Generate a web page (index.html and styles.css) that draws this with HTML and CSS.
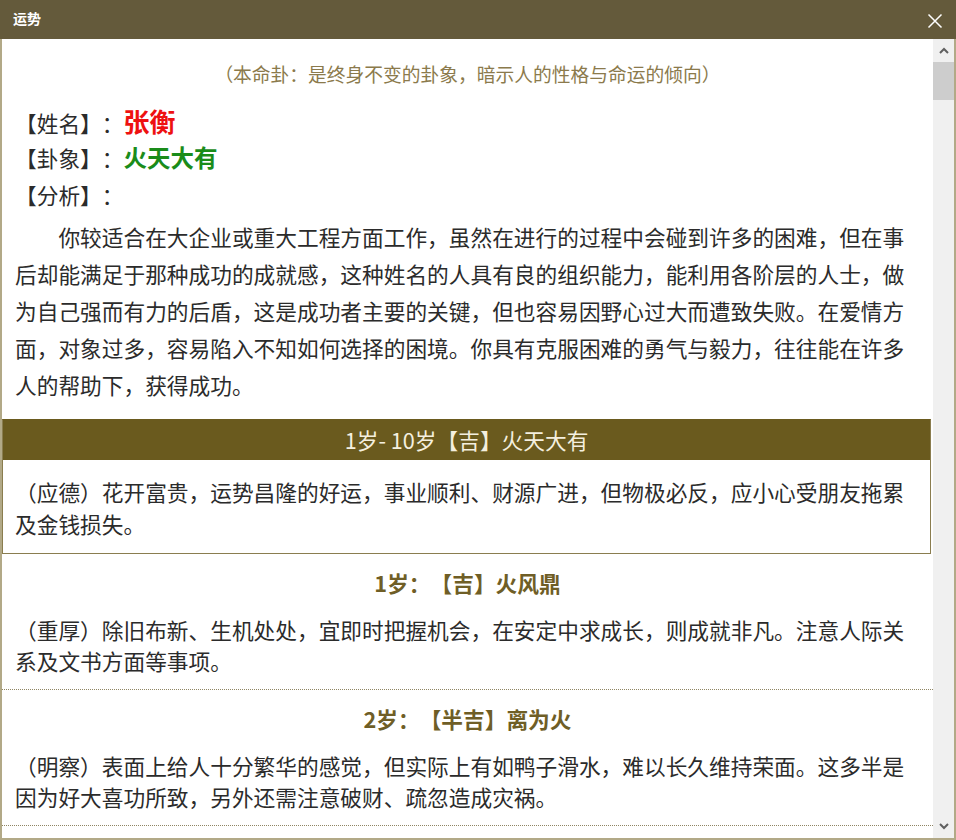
FILE: index.html
```html
<!DOCTYPE html>
<html lang="zh-CN">
<head>
<meta charset="utf-8">
<title>运势</title>
<link rel="stylesheet" href="styles.css">
</head>
<body>
<div class="window">
  <div class="titlebar">
    <span class="title">运势</span>
    <svg class="close" width="16" height="16" viewBox="0 0 16 16"><path d="M1.5 1.5 L14.5 14.5 M14.5 1.5 L1.5 14.5" stroke="#ffffff" stroke-width="1.5" fill="none"/></svg>
  </div>
  <div class="frame">
    <div class="content">
      <p class="note">（本命卦：是终身不变的卦象，暗示人的性格与命运的倾向）</p>
      <div class="info">
        <div class="row">【姓名】：<span class="name">张衡</span></div>
        <div class="row">【卦象】：<span class="gua">火天大有</span></div>
        <div class="row">【分析】：</div>
      </div>
      <p class="analysis">你较适合在大企业或重大工程方面工作，虽然在进行的过程中会碰到许多的困难，但在事后却能满足于那种成功的成就感，这种姓名的人具有良的组织能力，能利用各阶层的人士，做为自己强而有力的后盾，这是成功者主要的关键，但也容易因野心过大而遭致失败。在爱情方面，对象过多，容易陷入不知如何选择的困境。你具有克服困难的勇气与毅力，往往能在许多人的帮助下，获得成功。</p>
      <div class="period">
        <div class="period-head">1岁- 10岁【吉】火天大有</div>
        <p class="period-text">（应德）花开富贵，运势昌隆的好运，事业顺利、财源广进，但物极必反，应小心受朋友拖累及金钱损失。</p>
      </div>
      <div class="year">
        <h3 class="year-title">1岁：【吉】火风鼎</h3>
        <p class="year-text">（重厚）除旧布新、生机处处，宜即时把握机会，在安定中求成长，则成就非凡。注意人际关系及文书方面等事项。</p>
      </div>
      <div class="year">
        <h3 class="year-title">2岁：【半吉】离为火</h3>
        <p class="year-text">（明察）表面上给人十分繁华的感觉，但实际上有如鸭子滑水，难以长久维持荣面。这多半是因为好大喜功所致，另外还需注意破财、疏忽造成灾祸。</p>
      </div>
    </div>
    <div class="scrollbar">
      <div class="sb-btn"><svg width="10" height="7" viewBox="0 0 10 7"><path d="M1 6 L5 2 L9 6" stroke="#606060" stroke-width="2" fill="none"/></svg></div>
      <div class="sb-track"><div class="sb-thumb"></div></div>
      <div class="sb-btn"><svg width="10" height="7" viewBox="0 0 10 7"><path d="M1 1 L5 5 L9 1" stroke="#606060" stroke-width="2" fill="none"/></svg></div>
    </div>
  </div>
</div>
</body>
</html>
```

FILE: styles.css
```css
html, body {
  margin: 0;
  padding: 0;
  background: #ffffff;
}
body {
  font-family: "Noto Sans CJK SC", "Noto Sans", sans-serif;
  color: #2b2b2b;
  text-spacing-trim: space-all;
}
.window {
  width: 956px;
  height: 840px;
  display: flex;
  flex-direction: column;
  overflow: hidden;
}
.titlebar {
  height: 39px;
  flex: none;
  background: #645a3b;
  display: flex;
  align-items: center;
  justify-content: space-between;
  padding: 0 13px 0 13px;
  box-sizing: border-box;
}
.title {
  color: #ffffff;
  font-size: 14px;
  font-weight: bold;
  line-height: 39px;
  margin-top: -3px;
}
.close {
  display: block;
  margin-top: 3px;
  margin-right: 0;
}
.frame {
  flex: 1;
  display: flex;
  min-height: 0;
  border-left: 2px solid #b2a987;
  border-right: 2px solid #b2a987;
  border-bottom: 2px solid #b2a987;
}
.content {
  flex: 1;
  min-width: 0;
  overflow: hidden;
  font-size: 21.7px;
}
.note {
  margin: 20px 0 0;
  text-align: center;
  font-size: 18.75px;
  line-height: 30px;
  color: #8b7a4c;
}
.info {
  margin-top: 12.5px;
  padding-left: 13px;
}
.row {
  line-height: 37px;
  height: 37px;
  white-space: nowrap;
}
.name {
  color: #ee1111;
  font-weight: bold;
  font-size: 26px;
}
.gua {
  color: #1a8c1a;
  font-weight: bold;
  font-size: 23.5px;
}
.analysis {
  margin: 5px 0 0;
  padding: 0 18px 0 13px;
  line-height: 37px;
  text-indent: 2em;
}
.period {
  margin: 16.5px 2px 0 0;
  border: 1px solid #8a7d4f;
  border-top-color: #6a5a1e;
}
.period-head {
  height: 40px;
  line-height: 40px;
  background: #6a5a1e;
  color: #f4efdf;
  text-align: center;
  font-size: 21.7px;
}
.period-text {
  margin: 0;
  padding: 16px 15px 13px 12px;
  line-height: 32px;
}
.year {
  padding: 13px 18px 13px 13px;
  border-bottom: 1px dotted #8f8563;
}
.year-title {
  margin: 0;
  text-align: center;
  font-size: 21.7px;
  line-height: 32px;
  font-weight: bold;
  color: #6f5e26;
  padding-left: 5px;
}
.year-text {
  margin: 15px 0 0;
  line-height: 31px;
}
.scrollbar {
  width: 21px;
  flex: none;
  background: #f0f0f0;
  display: flex;
  flex-direction: column;
}
.sb-btn {
  height: 23px;
  flex: none;
  display: flex;
  align-items: center;
  justify-content: center;
}
.sb-track {
  flex: 1;
}
.sb-thumb {
  height: 38px;
  background: #cdcdcd;
}
```
